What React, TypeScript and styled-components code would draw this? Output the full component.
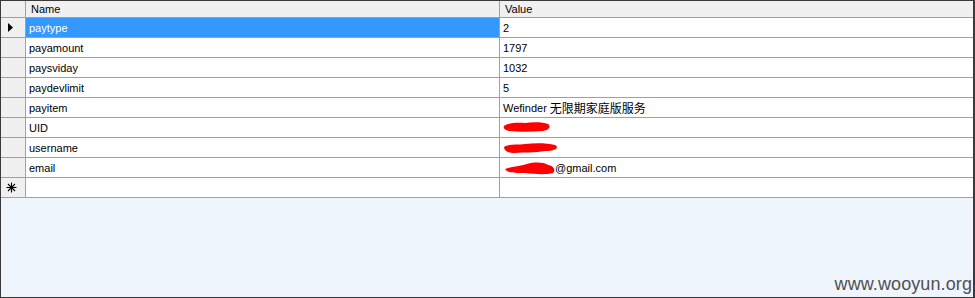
import React from 'react';
import styled, { createGlobalStyle } from 'styled-components';

const GlobalStyle = createGlobalStyle`
  html, body {
    margin: 0;
    padding: 0;
    background: #ffffff;
  }
  body {
    font-family: 'Liberation Sans', Arial, 'Noto Sans CJK SC', sans-serif;
  }
`;

const Frame = styled.div`
  position: relative;
  box-sizing: border-box;
  width: 975px;
  height: 298px;
  border: 1px solid #3a3a3a;
  border-right-width: 2px;
  background: #eef5fd;
  overflow: hidden;
`;

const Grid = styled.div`
  display: grid;
  grid-template-columns: 25px 474px 474px;
  grid-auto-rows: 20px;
  grid-template-rows: 17px;
  background: #ffffff;
`;

const Cell = styled.div<{ selected?: boolean; header?: boolean }>`
  box-sizing: border-box;
  display: flex;
  align-items: center;
  padding-left: ${({ header }) => (header ? 5 : 3)}px;
  border-right: 1px solid #a0a0a0;
  border-bottom: 1px solid #a0a0a0;
  font-size: 11px;
  white-space: nowrap;
  color: ${({ selected }) => (selected ? '#ffffff' : '#000000')};
  background: ${({ selected, header }) =>
    selected ? '#3399ff' : header ? '#f0f0f0' : '#ffffff'};
`;

const RowHead = styled.div`
  box-sizing: border-box;
  display: flex;
  align-items: center;
  justify-content: flex-start;
  padding-left: 5px;
  border-right: 1px solid #a0a0a0;
  border-bottom: 1px solid #a0a0a0;
  background: #f0f0f0;
`;

const Cjk = styled.span`
  font-family: 'Noto Sans CJK SC', sans-serif;
  font-size: 12px;
  margin-left: 3px;
`;

const Watermark = styled.div`
  position: absolute;
  right: 1px;
  bottom: 2px;
  font-size: 18px;
  color: #505050;
  letter-spacing: 0.1px;
`;

const Arrow = () => (
  <svg width="10" height="11" viewBox="0 0 10 11">
    <path d="M2 1 L7 5.5 L2 10 Z" fill="#000" />
  </svg>
);

const Star = () => (
  <svg width="11" height="11" viewBox="0 0 11 11">
    <g stroke="#000" strokeWidth="1.1">
      <line x1="5.5" y1="0.5" x2="5.5" y2="10.5" />
      <line x1="0.5" y1="5.5" x2="10.5" y2="5.5" />
      <line x1="2" y1="2" x2="9" y2="9" />
      <line x1="9" y1="2" x2="2" y2="9" />
    </g>
  </svg>
);

const Scribble = ({ w, d }: { w: number; d: string }) => (
  <svg width={w} height="16" viewBox={`0 0 ${w} 16`} style={{ display: 'block' }}>
    <path d={d} fill="#ff0000" />
  </svg>
);

const rows = [
  { name: 'paytype', value: '2' },
  { name: 'payamount', value: '1797' },
  { name: 'paysviday', value: '1032' },
  { name: 'paydevlimit', value: '5' },
  { name: 'payitem', value: 'cjk' },
  { name: 'UID', value: 'uid' },
  { name: 'username', value: 'user' },
  { name: 'email', value: 'email' },
];

const renderValue = (v: string) => {
  if (v === 'cjk')
    return (
      <>
        Wefinder<Cjk>无限期家庭版服务</Cjk>
      </>
    );
  if (v === 'uid')
    return (
      <Scribble
        w={48}
        d="M1 6 C5 3 14 2 22 3 C30 2 40 2 45 4 C48 6 47 10 40 11 C28 12 16 12 6 11 C1 10 0 8 1 6 Z"
      />
    );
  if (v === 'user')
    return (
      <Scribble
        w={56}
        d="M1 7 C5 4 14 5 22 4 C32 3 44 3 52 5 C56 7 54 11 42 11 C32 13 22 12 12 13 C5 13 1 11 1 7 Z"
      />
    );
  if (v === 'email')
    return (
      <>
        <Scribble
          w={52}
          d="M2 9 C8 7 16 6 24 4 C32 2 40 2 45 5 C51 6 53 10 50 13 C42 15 32 14 22 13 C12 13 4 13 2 9 Z"
        />
        @gmail.com
      </>
    );
  return v;
};

export default function App() {
  return (
    <>
      <GlobalStyle />
      <Frame>
        <Grid>
          <RowHead />
          <Cell header>Name</Cell>
          <Cell header>Value</Cell>
          {rows.map((r, i) => (
            <React.Fragment key={r.name}>
              <RowHead>{i === 0 ? <Arrow /> : null}</RowHead>
              <Cell selected={i === 0}>{r.name}</Cell>
              <Cell>{renderValue(r.value)}</Cell>
            </React.Fragment>
          ))}
          <RowHead>
            <Star />
          </RowHead>
          <Cell />
          <Cell />
        </Grid>
        <Watermark>www.wooyun.org</Watermark>
      </Frame>
    </>
  );
}
